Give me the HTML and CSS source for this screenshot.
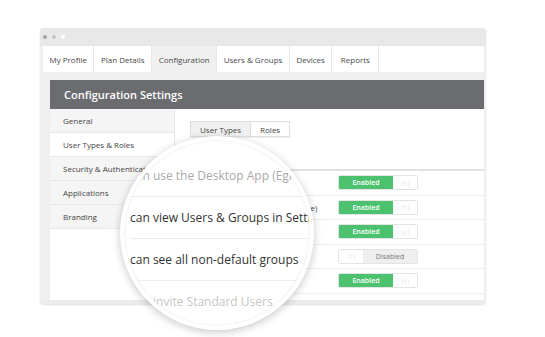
FILE: index.html
```html
<!DOCTYPE html>
<html lang="en">
<head>
    <meta charset="UTF-8">
    <meta name="viewport" content="width=device-width, initial-scale=1.0">
    <title>Configuration Settings</title>
    <link rel="stylesheet" href="styles.css">
</head>
<body>
    <div class="page">
        <div class="window">
            <div class="titlebar">
                <span class="dot dot-dark"></span>
                <span class="dot dot-mid"></span>
                <span class="dot dot-light"></span>
            </div>

            <div class="window-body">
                <ul class="tabs">
                    <li class="tab">My Profile</li>
                    <li class="tab">Plan Details</li>
                    <li class="tab active">Configuration</li>
                    <li class="tab">Users &amp; Groups</li>
                    <li class="tab">Devices</li>
                    <li class="tab">Reports</li>
                </ul>

                <div class="panel">
                    <div class="panel-header">Configuration Settings</div>
                    <div class="panel-body">
                        <ul class="sidebar">
                            <li class="side-item">General</li>
                            <li class="side-item active">User Types &amp; Roles</li>
                            <li class="side-item">Security &amp; Authentication</li>
                            <li class="side-item">Applications</li>
                            <li class="side-item">Branding</li>
                        </ul>

                        <div class="content">
                            <div class="subtabs">
                                <span class="subtab active">User Types</span>
                                <span class="subtab">Roles</span>
                            </div>

                            <div class="perm-table">
                                <div class="perm-row">
                                    <span class="perm-label">can use the Desktop App</span>
                                    <div class="toggle on"><span class="toggle-state">Enabled</span><span class="toggle-grip">|||</span></div>
                                </div>
                                <div class="perm-row">
                                    <span class="perm-label">can view Groups (read-only mode)</span>
                                    <div class="toggle on"><span class="toggle-state">Enabled</span><span class="toggle-grip">|||</span></div>
                                </div>
                                <div class="perm-row">
                                    <span class="perm-label">can view Users</span>
                                    <div class="toggle on"><span class="toggle-state">Enabled</span><span class="toggle-grip">|||</span></div>
                                </div>
                                <div class="perm-row">
                                    <span class="perm-label">can see all groups</span>
                                    <div class="toggle off"><span class="toggle-grip">|||</span><span class="toggle-state">Disabled</span></div>
                                </div>
                                <div class="perm-row">
                                    <span class="perm-label">invite Users</span>
                                    <div class="toggle on"><span class="toggle-state">Enabled</span><span class="toggle-grip">|||</span></div>
                                </div>
                                <div class="perm-row">
                                    <span class="perm-label"></span>
                                    <div class="select-box"></div>
                                    <div class="select-box wide"></div>
                                </div>
                            </div>
                        </div>
                    </div>
                </div>
            </div>
        </div>

        <!-- magnifier over the permissions list -->
        <div class="lens">
            <div class="lens-row faded">can use the Desktop App (Egnyte Desktop App)</div>
            <div class="lens-row">can view Users &amp; Groups in Settings</div>
            <div class="lens-row">can see all non-default groups</div>
            <div class="lens-row faded-more">invite Standard Users</div>
        </div>
    </div>
</body>
</html>
```

FILE: styles.css
```css
* {
    box-sizing: border-box;
    margin: 0;
    padding: 0;
}

body {
    background-color: #fff;
    font-family: "Open Sans", "Liberation Sans", sans-serif;
    color: #444;
}

ul {
    list-style: none;
}

.page {
    position: relative;
    width: 545px;
    height: 337px;
    padding: 28px 0 0 40px;
    overflow: hidden;
}

.window {
    width: 446px;
    height: 276px;
    background-color: #ececec;
    border-radius: 4px;
    overflow: hidden;
    box-shadow: 0 1px 2px rgba(0, 0, 0, 0.12);
}

.titlebar {
    height: 18px;
    display: flex;
    align-items: center;
    gap: 5px;
    padding-left: 3px;
    background-color: #e8e8e8;
}

.dot {
    width: 4px;
    height: 4px;
    border-radius: 50%;
}

.dot-dark { background-color: #a4a4a4; }
.dot-mid { background-color: #c4c4c4; }
.dot-light { background-color: #fff; }

.window-body {
    padding: 0 2px 0 3px;
    background-color: #efefef;
}

/* Top navigation tabs */
.tabs {
    display: flex;
    height: 26px;
    background-color: #fff;
}

.tab {
    display: flex;
    align-items: center;
    padding: 0 6.5px;
    font-size: 8px;
    color: #4a4a4a;
    border-right: 1px solid #e8e8e8;
}

.tab:last-child {
    padding: 0 8.5px;
}

.tab.active {
    background-color: #f0f0f0;
}

/* Settings panel */
.panel {
    margin: 8px 0 0 7px;
    height: 220px;
    background-color: #fff;
    display: flex;
    flex-direction: column;
}

.panel-header {
    height: 29px;
    display: flex;
    align-items: center;
    padding-left: 14px;
    background-color: #6b6c70;
    color: #fff;
    font-size: 11px;
    font-weight: 600;
}

.panel-body {
    flex: 1;
    display: flex;
    overflow: hidden;
}

.sidebar {
    width: 125px;
    flex-shrink: 0;
    border-right: 1px solid #e6e6e6;
}

.side-item {
    height: 24px;
    display: flex;
    align-items: center;
    padding-left: 13px;
    font-size: 8px;
    color: #444;
    white-space: nowrap;
    overflow: hidden;
    background-color: #f5f5f5;
    border-bottom: 1px solid #e8e8e8;
}

.side-item.active {
    background-color: #fff;
}

.content {
    flex: 1;
    min-width: 0;
    padding-top: 12px;
}

.subtabs {
    display: flex;
    margin-left: 15px;
}

.subtab {
    height: 16px;
    display: flex;
    align-items: center;
    padding: 0 9px;
    font-size: 8px;
    color: #444;
    background-color: #fff;
    border: 1px solid #dedede;
    box-shadow: 0 1px 1px rgba(0, 0, 0, 0.06);
}

.subtab.active {
    background-color: #f1f1f1;
    border-right: none;
}

.perm-table {
    margin-top: 32px;
    border-top: 2px solid #e2e2e2;
}

.perm-row {
    height: 24.5px;
    display: flex;
    align-items: center;
    border-bottom: 1px solid #efefef;
}

.perm-label {
    width: 163px;
    flex-shrink: 0;
    padding-left: 15px;
    font-size: 8px;
    color: #444;
    white-space: nowrap;
    overflow: hidden;
}

/* Enabled / Disabled switch */
.toggle {
    width: 80px;
    height: 15px;
    display: flex;
    border: 1px solid #e4e4e4;
    border-radius: 2px;
    overflow: hidden;
    font-size: 7px;
}

.toggle-state {
    width: 54px;
    display: flex;
    align-items: center;
    justify-content: center;
}

.toggle-grip {
    flex: 1;
    display: flex;
    align-items: center;
    justify-content: center;
    color: #d4d4d4;
    font-size: 6px;
    letter-spacing: -0.5px;
    background-color: #fff;
}

.toggle.on .toggle-state {
    background-color: #4cc26e;
    color: #fff;
    font-weight: 600;
}

.toggle.off .toggle-state {
    background-color: #efefef;
    color: #777;
}

.select-box {
    width: 87px;
    height: 15px;
    margin-top: 8px;
    border: 1px solid #dedede;
    border-radius: 2px;
}

.select-box.wide {
    margin-left: 10px;
    width: 60px;
}

/* Magnifier */
.lens {
    position: absolute;
    left: 120px;
    top: 136px;
    width: 194px;
    height: 194px;
    border: 4px solid #fff;
    border-radius: 50%;
    background-color: #fff;
    overflow: hidden;
    padding-top: 15px;
    box-shadow: 0 2px 8px rgba(0, 0, 0, 0.22), inset 0 0 3px rgba(0, 0, 0, 0.12);
}

.lens-row {
    height: 42px;
    margin-left: 6px;
    line-height: 41px;
    font-size: 12px;
    color: #333;
    white-space: nowrap;
    border-bottom: 1px solid #ececec;
}

.lens-row.faded {
    color: #a9a9a9;
}

.lens-row.faded-more {
    padding-left: 23px;
    color: #c6c6c6;
    border-bottom: none;
}
```
